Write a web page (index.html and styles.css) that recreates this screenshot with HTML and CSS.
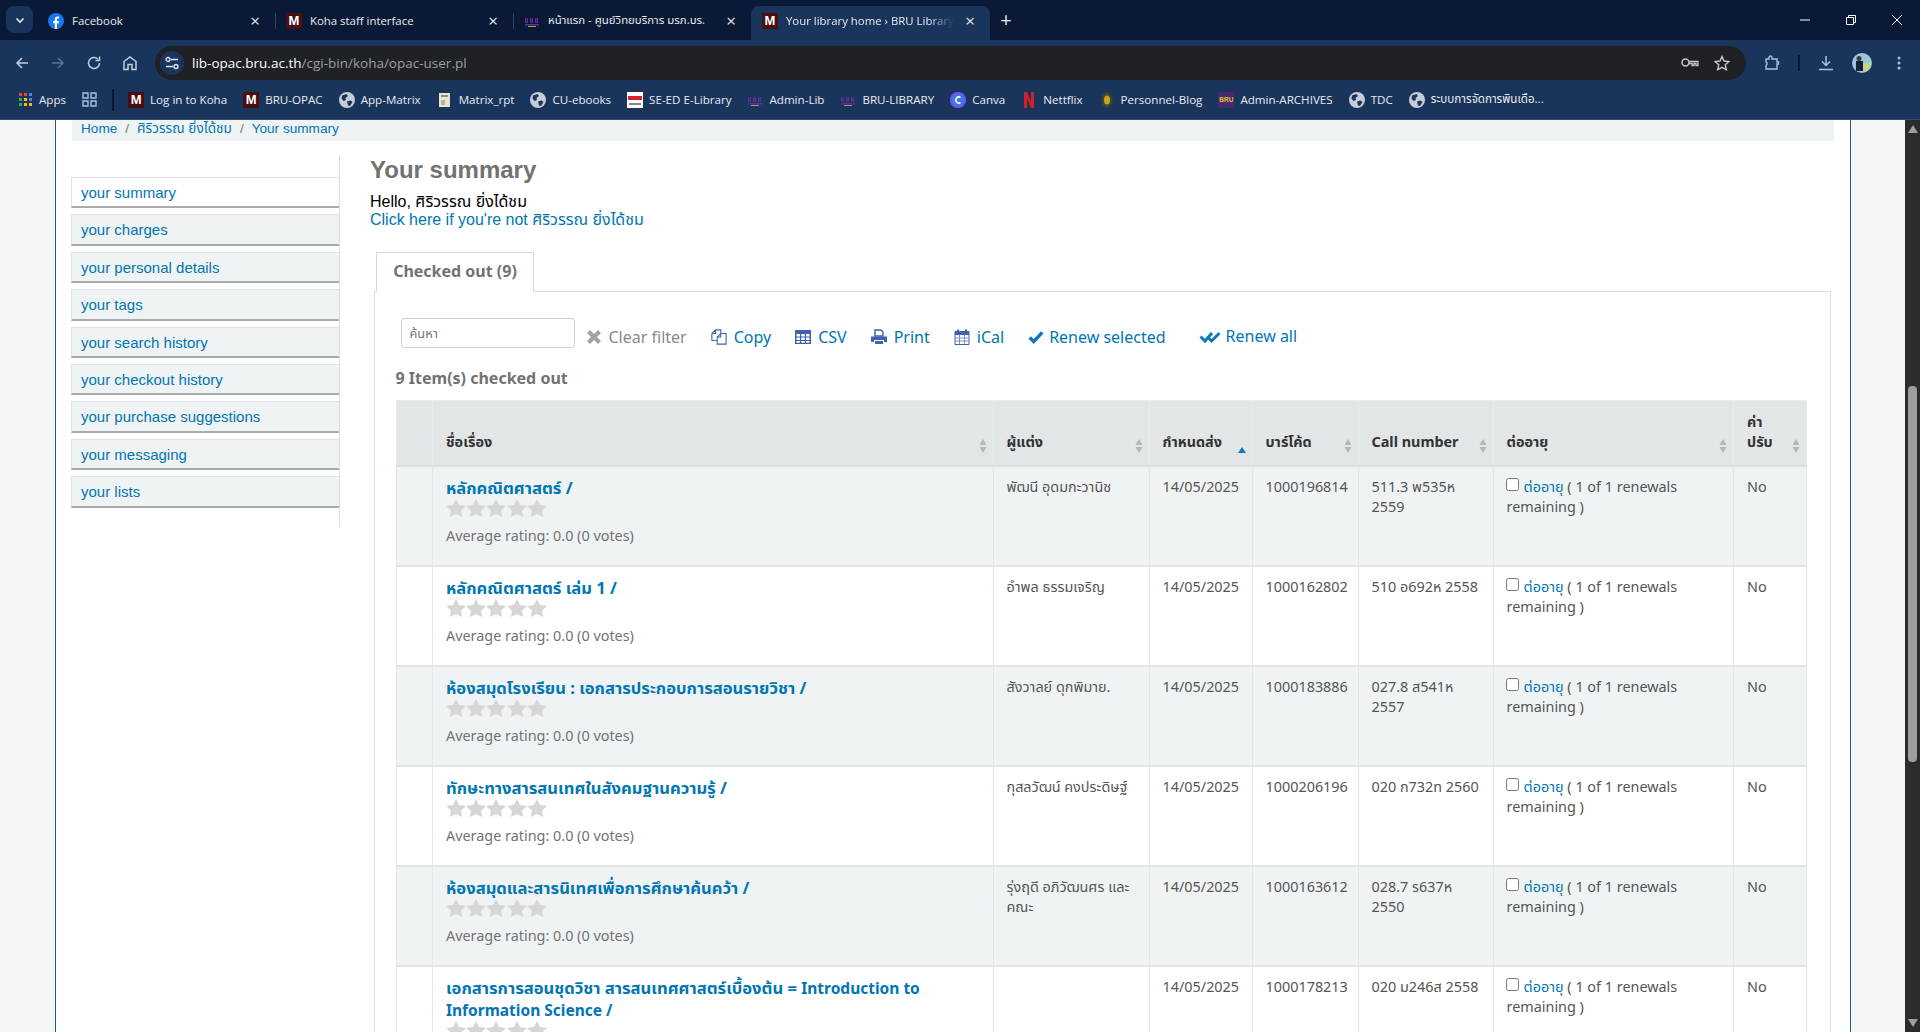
FILE: index.html
```html
<!DOCTYPE html>
<html lang="en">
<head>
    <meta charset="UTF-8">
    <title>Your library home › BRU Library</title>
    <link rel="stylesheet" href="styles.css">
</head>
<body>
    <svg class="sprite" width="0" height="0">
        <symbol id="globe" viewBox="0 0 16 16">
            <circle cx="8" cy="8" r="8" fill="#c7cdd6"/>
            <path d="M3 3.500 7.500 2 9 4 6.500 6 7 8 4.500 9 2.500 6.500Z M8 9.500 11.500 8.500 13.500 10 11 14 9 13.500Z" fill="#1a355c"/>
        </symbol>
        <symbol id="bru" viewBox="0 0 16 16">
            <path d="M1 5h1.500v5H1ZM3 5h1v5H3ZM6 5h1.500v5H6ZM8 5h1v5H8ZM11 5h1.500v5H11ZM13 5h1v5h-1Z" fill="#5b2f96"/>
            <path d="M1 11h14v1.500H1Z" fill="#5b2f96"/>
            <path d="M4 13h8v1H4Z" fill="#b79a3a"/>
        </symbol>
        <symbol id="star" viewBox="0 0 20 18">
            <path d="M10 0 13 6 20 6.900 15 11.700 16.200 18 10 15 3.800 18 5 11.700 0 6.900 7 6Z" fill="#d6d6d6"/>
        </symbol>
        <symbol id="sort" viewBox="0 0 8 16">
            <path d="M4 1 7.500 7H.5ZM4 15 .5 9h7Z" fill="#b4b8b8"/>
        </symbol>
    </svg>

    <!-- Browser chrome -->
    <div class="tabstrip">
        <div class="tab-search"><svg width="12" height="12" viewBox="0 0 12 12"><path d="M2.500 4.500 6 8l3.500-3.500" fill="none" stroke="#e8eaed" stroke-width="1.600"/></svg></div>
        <div class="tab">
            <svg class="favicon" viewBox="0 0 16 16"><circle cx="8" cy="8" r="8" fill="#1877f2"/><path d="M6.800 16V10.200H5V8h1.800V6.400C6.800 4.500 7.900 3.500 9.600 3.500c.8 0 1.500.1 1.500.1v1.900h-.9c-.9 0-1.200.6-1.200 1.200V8h2l-.3 2.200H9V16Z" fill="#fff"/></svg>
            <span class="tab-title">Facebook</span><span class="tab-close">&times;</span>
        </div>
        <div class="tab">
            <span class="favicon m-icon">M</span>
            <span class="tab-title">Koha staff interface</span><span class="tab-close">&times;</span>
        </div>
        <div class="tab">
            <svg class="favicon"><use href="#bru"/></svg>
            <span class="tab-title">หน้าแรก - ศูนย์วิทยบริการ มรภ.บร.</span><span class="tab-close">&times;</span>
        </div>
        <div class="tab tab-active">
            <span class="favicon m-icon">M</span>
            <span class="tab-title">Your library home › BRU Library</span><span class="tab-close">&times;</span>
        </div>
        <span class="tab-new">+</span>
        <div class="window-controls">
            <svg width="12" height="12" viewBox="0 0 12 12"><path d="M1 6h10" stroke="#fff"/></svg>
            <svg width="12" height="12" viewBox="0 0 12 12"><path d="M1.500 3.500h7v7h-7ZM3.500 3V1.500h7v7H9" fill="none" stroke="#fff"/></svg>
            <svg width="12" height="12" viewBox="0 0 12 12"><path d="M1 1l10 10M11 1 1 11" stroke="#fff"/></svg>
        </div>
    </div>

    <div class="toolbar">
        <svg class="nav-icon" viewBox="0 0 16 16"><path d="M14 8H3M8 3 3 8l5 5" fill="none" stroke="#c2cede" stroke-width="1.500"/></svg>
        <svg class="nav-icon" viewBox="0 0 16 16"><path d="M2 8h11M8 3l5 5-5 5" fill="none" stroke="#5d7391" stroke-width="1.500"/></svg>
        <svg class="nav-icon" viewBox="0 0 16 16"><path d="M13.500 8A5.500 5.500 0 1 1 11.800 4M13.500 1.500v4h-4" fill="none" stroke="#c2cede" stroke-width="1.500"/></svg>
        <svg class="nav-icon" viewBox="0 0 16 16"><path d="M2 14.500V6.500L8 2l6 4.500v8h-4V9.500H6v5Z" fill="none" stroke="#c2cede" stroke-width="1.500"/></svg>
        <div class="omnibox">
            <span class="site-info"><svg width="14" height="14" viewBox="0 0 14 14"><path d="M6 3.500h7M1 10.500h7" stroke="#e3e8ef" stroke-width="1.300"/><circle cx="3" cy="3.500" r="2" fill="none" stroke="#e3e8ef" stroke-width="1.300"/><circle cx="11" cy="10.500" r="2" fill="none" stroke="#e3e8ef" stroke-width="1.300"/></svg></span>
            <span class="url">lib-opac.bru.ac.th<span class="url-path">/cgi-bin/koha/opac-user.pl</span></span>
            <svg class="omni-icon key" viewBox="0 0 18 12"><circle cx="4.500" cy="5.500" r="3.500" fill="none" stroke="#c4c7c5" stroke-width="1.500"/><path d="M8 4.500h9v4h-2v-2h-2v2h-2v-2H8" fill="none" stroke="#c4c7c5" stroke-width="1.300"/></svg>
            <svg class="omni-icon star" viewBox="0 0 16 16"><path d="M8 1.500 10 6l5 .5-3.700 3.300 1 4.900L8 12.300l-4.300 2.400 1-4.900L1 6.500 6 6Z" fill="none" stroke="#c4c7c5" stroke-width="1.400"/></svg>
        </div>
        <svg class="tool-icon ext" viewBox="0 0 16 16"><path d="M2 4h3V2.500a1.500 1.500 0 0 1 3 0V4h5v3h1.500v2H13v5H2v-3.500c1.500-.5 1.500-3 0-3.500Z" fill="none" stroke="#aac1e2" stroke-width="1.400"/></svg>
        <span class="tool-sep"></span>
        <svg class="tool-icon down" viewBox="0 0 16 16"><path d="M8 1v9M4 6.500 8 10.500l4-4M1 14.500h14" fill="none" stroke="#aac1e2" stroke-width="1.500"/></svg>
        <svg class="avatar" viewBox="0 0 20 20"><circle cx="10" cy="10" r="10" fill="#9fc6d8"/><path d="M11 10h8a9 9 0 0 1-4 8h-4Z" fill="#c9d08c"/><path d="M4 8h7v10H4Z" fill="#14233c"/><circle cx="7" cy="5.500" r="2.500" fill="#3a3a4a"/></svg>
        <svg class="tool-icon menu" viewBox="0 0 16 16"><circle cx="8" cy="3" r="1.500" fill="#aac1e2"/><circle cx="8" cy="8" r="1.500" fill="#aac1e2"/><circle cx="8" cy="13" r="1.500" fill="#aac1e2"/></svg>
    </div>

    <div class="bookmarks">
        <div class="bm bm-apps">
            <svg class="favicon" viewBox="0 0 15 15"><path d="M1 1h3v3H1Z" fill="#ea4335"/><path d="M6 1h3v3H6Z" fill="#ea4335"/><path d="M11 1h3v3h-3Z" fill="#4285f4"/><path d="M1 6h3v3H1Z" fill="#34a853"/><path d="M6 6h3v3H6Z" fill="#fbbc04"/><path d="M11 6h3v3h-3Z" fill="#4285f4"/><path d="M1 11h3v3H1Z" fill="#34a853"/><path d="M6 11h3v3H6Z" fill="#fbbc04"/><path d="M11 11h3v3h-3Z" fill="#fbbc04"/></svg>
            Apps
        </div>
        <svg class="bm-groups" viewBox="0 0 15 15"><path d="M1 1h5v5H1ZM9 1h5v5H9ZM1 9h5v5H1ZM9 9h5v5H9Z" fill="none" stroke="#aac1e2" stroke-width="1.400"/></svg>
        <span class="bm-sep"></span>
        <div class="bm"><span class="favicon m-icon">M</span>Log in to Koha</div>
        <div class="bm"><span class="favicon m-icon">M</span>BRU-OPAC</div>
        <div class="bm"><svg class="favicon"><use href="#globe"/></svg>App-Matrix</div>
        <div class="bm"><svg class="favicon" viewBox="0 0 16 16"><path d="M2 1h11v14H2Z" fill="#e8e4cf"/><path d="M4 3h7v2H4Z" fill="#7c9a6b"/><path d="M4 8h4v5H4Z" fill="#b5b39a"/></svg>Matrix_rpt</div>
        <div class="bm"><svg class="favicon"><use href="#globe"/></svg>CU-ebooks</div>
        <div class="bm"><svg class="favicon" viewBox="0 0 16 16"><path d="M0 0h16v16H0Z" fill="#fff"/><path d="M1 4h14v4H1Z" fill="#d3232a"/><path d="M2 11h12v2H2Z" fill="#888"/></svg>SE-ED E-Library</div>
        <div class="bm"><svg class="favicon"><use href="#bru"/></svg>Admin-Lib</div>
        <div class="bm"><svg class="favicon"><use href="#bru"/></svg>BRU-LIBRARY</div>
        <div class="bm"><svg class="favicon" viewBox="0 0 16 16"><circle cx="8" cy="8" r="8" fill="#3d7be0"/><circle cx="8" cy="8" r="7.200" fill="none" stroke="#8b3dff" stroke-width="1.500"/><path d="M10.500 5.500a3 3 0 1 0 0 5" fill="none" stroke="#fff" stroke-width="1.500"/></svg>Canva</div>
        <div class="bm"><svg class="favicon" viewBox="0 0 16 16"><path d="M3 0h3l4 10V0h3v16h-3L6 6v10H3Z" fill="#d81f26"/></svg>Nettflix</div>
        <div class="bm"><svg class="favicon" viewBox="0 0 16 16"><ellipse cx="8" cy="8" rx="5.500" ry="7.500" fill="#3c4a2a"/><ellipse cx="8" cy="8" rx="3" ry="4.500" fill="#c9a227"/></svg>Personnel-Blog</div>
        <div class="bm"><span class="favicon bru-icon">BRU</span>Admin-ARCHIVES</div>
        <div class="bm"><svg class="favicon"><use href="#globe"/></svg>TDC</div>
        <div class="bm"><svg class="favicon"><use href="#globe"/></svg>ระบบการจัดการพินเดือ...</div>
    </div>

    <div class="viewport">
        <div class="page">
            <div class="wrap">
                <ul class="breadcrumb">
                    <li><a href="#">Home</a></li>
                    <li><a href="#">ศิริวรรณ ยิ่งได้ชม</a></li>
                    <li><a href="#">Your summary</a></li>
                </ul>

                <div class="columns">
                    <!-- User menu -->
                    <nav class="usermenu">
                        <a class="active" href="#">your summary</a>
                        <a href="#">your charges</a>
                        <a href="#">your personal details</a>
                        <a href="#">your tags</a>
                        <a href="#">your search history</a>
                        <a href="#">your checkout history</a>
                        <a href="#">your purchase suggestions</a>
                        <a href="#">your messaging</a>
                        <a href="#">your lists</a>
                    </nav>

                    <main class="content">
                        <h1>Your summary</h1>
                        <p class="hello">Hello, ศิริวรรณ ยิ่งได้ชม<br><a href="#">Click here if you're not ศิริวรรณ ยิ่งได้ชม</a></p>

                        <div class="tabs"><a class="tab-label" href="#">Checked out (9)</a></div>
                        <section class="panel">
                            <div class="actions">
                                <input class="filter" type="text" placeholder="ค้นหา">
                                <a class="action muted" href="#"><svg class="ico" viewBox="0 0 16 16"><path d="M1 4 4 1l4 4 4-4 3 3-4 4 4 4-3 3-4-4-4 4-3-3 4-4Z" fill="#a3a3a3"/></svg>Clear filter</a>
                                <a class="action" href="#"><svg class="ico" viewBox="0 0 18 18"><path d="M11 5V1H5L1 5v8h6M5 1v4H1M11 5h6v12H7V9ZM11 5v4H7" fill="none" stroke="#3f62ad" stroke-width="1.200"/></svg>Copy</a>
                                <a class="action" href="#"><svg class="ico" viewBox="0 0 16 14"><path d="M0 0h16v14H0Z" fill="#3f62ad"/><path d="M1.500 4h3.500v2.500H1.500ZM6.200 4h3.600v2.500H6.200ZM11 4h3.500v2.500H11ZM1.500 7.500h3.500V10H1.500ZM6.200 7.500h3.600V10H6.200ZM11 7.500h3.500V10H11ZM1.500 11h3.500v1.800H1.500ZM6.200 11h3.600v1.800H6.200ZM11 11h3.500v1.800H11Z" fill="#fff"/></svg>CSV</a>
                                <a class="action" href="#"><svg class="ico" viewBox="0 0 16 16"><path d="M4 1h6l2 2v4H4Z" fill="none" stroke="#3f62ad" stroke-width="1.400"/><path d="M0 7.500h16V13h-3v-2H3v2H0ZM4 12h8v3H4Z" fill="#3f62ad"/></svg>Print</a>
                                <a class="action" href="#"><svg class="ico" viewBox="0 0 16 16"><path d="M1 2.500h14v13H1Z" fill="#fff" stroke="#3f62ad"/><path d="M1 2.500h14V6H1Z" fill="#3f62ad"/><path d="M4 .5v3M12 .5v3" stroke="#3f62ad" stroke-width="2"/><path d="M1 9h14M1 12h14M5.500 6v9M10.500 6v9" stroke="#7d8fc4"/></svg>iCal</a>
                                <a class="action renew" href="#"><svg class="ico" viewBox="0 0 14 12"><path d="M1.500 6.500 5 10l7.500-8" fill="none" stroke="#0d79b8" stroke-width="3"/></svg>Renew selected</a>
                                <a class="action renew-all" href="#"><svg class="ico" viewBox="0 0 22 12"><path d="M1.500 5.500 6 10l7-8M9.500 7l3 3L20.500 2" fill="none" stroke="#0d79b8" stroke-width="3"/></svg>Renew all</a>
                            </div>
                            <p class="count">9 Item(s) checked out</p>

                            <table class="checkouts">
                                <colgroup>
                                    <col class="c-blank"><col class="c-title"><col class="c-author"><col class="c-due"><col class="c-barcode"><col class="c-call"><col class="c-renew"><col class="c-fine">
                                </colgroup>
                                <thead>
                                    <tr>
                                        <th></th>
                                        <th>ชื่อเรื่อง<svg class="sort"><use href="#sort"/></svg></th>
                                        <th>ผู้แต่ง<svg class="sort"><use href="#sort"/></svg></th>
                                        <th>กำหนดส่ง<svg class="sort" viewBox="0 0 8 16"><path d="M4 9 8 15H0Z" fill="#0d79c8"/></svg></th>
                                        <th>บาร์โค้ด<svg class="sort"><use href="#sort"/></svg></th>
                                        <th>Call number<svg class="sort"><use href="#sort"/></svg></th>
                                        <th>ต่ออายุ<svg class="sort"><use href="#sort"/></svg></th>
                                        <th>ค่า<br>ปรับ<svg class="sort"><use href="#sort"/></svg></th>
                                    </tr>
                                </thead>
                                <tbody>
                                    <tr>
                                        <td></td>
                                        <td><a class="book" href="#">หลักคณิตศาสตร์ /</a><div class="stars"><svg><use href="#star"/></svg><svg><use href="#star"/></svg><svg><use href="#star"/></svg><svg><use href="#star"/></svg><svg><use href="#star"/></svg></div><div class="rating">Average rating: 0.0 (0 votes)</div></td>
                                        <td>พัฒนี อุดมกะวานิช</td>
                                        <td>14/05/2025</td>
                                        <td>1000196814</td>
                                        <td>511.3 พ535ห 2559</td>
                                        <td><input type="checkbox"><a href="#">ต่ออายุ</a> ( 1 of 1 renewals remaining )</td>
                                        <td>No</td>
                                    </tr>
                                    <tr>
                                        <td></td>
                                        <td><a class="book" href="#">หลักคณิตศาสตร์ เล่ม 1 /</a><div class="stars"><svg><use href="#star"/></svg><svg><use href="#star"/></svg><svg><use href="#star"/></svg><svg><use href="#star"/></svg><svg><use href="#star"/></svg></div><div class="rating">Average rating: 0.0 (0 votes)</div></td>
                                        <td>อำพล ธรรมเจริญ</td>
                                        <td>14/05/2025</td>
                                        <td>1000162802</td>
                                        <td>510 อ692ห 2558</td>
                                        <td><input type="checkbox"><a href="#">ต่ออายุ</a> ( 1 of 1 renewals remaining )</td>
                                        <td>No</td>
                                    </tr>
                                    <tr>
                                        <td></td>
                                        <td><a class="book" href="#">ห้องสมุดโรงเรียน : เอกสารประกอบการสอนรายวิชา /</a><div class="stars"><svg><use href="#star"/></svg><svg><use href="#star"/></svg><svg><use href="#star"/></svg><svg><use href="#star"/></svg><svg><use href="#star"/></svg></div><div class="rating">Average rating: 0.0 (0 votes)</div></td>
                                        <td>สังวาลย์ ดุกพิมาย.</td>
                                        <td>14/05/2025</td>
                                        <td>1000183886</td>
                                        <td>027.8 ส541ห 2557</td>
                                        <td><input type="checkbox"><a href="#">ต่ออายุ</a> ( 1 of 1 renewals remaining )</td>
                                        <td>No</td>
                                    </tr>
                                    <tr>
                                        <td></td>
                                        <td><a class="book" href="#">ทักษะทางสารสนเทศในสังคมฐานความรู้ /</a><div class="stars"><svg><use href="#star"/></svg><svg><use href="#star"/></svg><svg><use href="#star"/></svg><svg><use href="#star"/></svg><svg><use href="#star"/></svg></div><div class="rating">Average rating: 0.0 (0 votes)</div></td>
                                        <td>กุสลวัฒน์ คงประดิษฐ์</td>
                                        <td>14/05/2025</td>
                                        <td>1000206196</td>
                                        <td>020 ก732ท 2560</td>
                                        <td><input type="checkbox"><a href="#">ต่ออายุ</a> ( 1 of 1 renewals remaining )</td>
                                        <td>No</td>
                                    </tr>
                                    <tr>
                                        <td></td>
                                        <td><a class="book" href="#">ห้องสมุดและสารนิเทศเพื่อการศึกษาค้นคว้า /</a><div class="stars"><svg><use href="#star"/></svg><svg><use href="#star"/></svg><svg><use href="#star"/></svg><svg><use href="#star"/></svg><svg><use href="#star"/></svg></div><div class="rating">Average rating: 0.0 (0 votes)</div></td>
                                        <td>รุ่งฤดี อภิวัฒนศร และคณะ</td>
                                        <td>14/05/2025</td>
                                        <td>1000163612</td>
                                        <td>028.7 ร637ห 2550</td>
                                        <td><input type="checkbox"><a href="#">ต่ออายุ</a> ( 1 of 1 renewals remaining )</td>
                                        <td>No</td>
                                    </tr>
                                    <tr>
                                        <td></td>
                                        <td><a class="book" href="#">เอกสารการสอนชุดวิชา สารสนเทศศาสตร์เบื้องต้น = <span class="latin">Introduction to Information Science /</span></a><div class="stars"><svg><use href="#star"/></svg><svg><use href="#star"/></svg><svg><use href="#star"/></svg><svg><use href="#star"/></svg><svg><use href="#star"/></svg></div><div class="rating">Average rating: 0.0 (0 votes)</div></td>
                                        <td></td>
                                        <td>14/05/2025</td>
                                        <td>1000178213</td>
                                        <td>020 ม246ส 2558</td>
                                        <td><input type="checkbox"><a href="#">ต่ออายุ</a> ( 1 of 1 renewals remaining )</td>
                                        <td>No</td>
                                    </tr>
                                </tbody>
                            </table>
                        </section>
                    </main>
                </div>
            </div>
        </div>

        <div class="scrollbar">
            <span class="sb-arrow"></span>
            <div class="sb-track"><span class="sb-thumb"></span></div>
            <span class="sb-arrow sb-down"></span>
        </div>
    </div>
</body>
</html>
```

FILE: styles.css
```css
:root {
    --chrome-dark: #0a1a36;
    --chrome: #1a355c;
    --link: #0076b2;
    --row: #f0f3f3;
    --ui-font: "Open Sans", "Noto Sans", "Noto Sans Thai", Tahoma, sans-serif;
    --page-font: "Liberation Sans", "Noto Sans Thai", Tahoma, sans-serif;
    --body-font: "Noto Sans", "Open Sans", "Noto Sans Thai", Tahoma, sans-serif;
}

* {
    box-sizing: border-box;
}

html, body {
    margin: 0;
    height: 100%;
    overflow: hidden;
}

body {
    display: flex;
    flex-direction: column;
    background: var(--chrome);
    font-family: var(--page-font);
}

a {
    color: var(--link);
    text-decoration: none;
}

.sprite {
    position: absolute;
}

.favicon {
    flex: none;
    width: 16px;
    height: 16px;
}

.m-icon {
    display: flex;
    align-items: center;
    justify-content: center;
    background: #4a0f12;
    color: #fff;
    font: bold 13px "Liberation Sans", sans-serif;
}

.bru-icon {
    display: flex;
    align-items: center;
    justify-content: center;
    background: #46296f;
    color: #e4c33a;
    font: bold 6.5px "Liberation Sans", sans-serif;
}

/* Tabs */
.tabstrip {
    flex: none;
    height: 40px;
    display: flex;
    align-items: flex-end;
    padding-left: 37px;
    position: relative;
    background: var(--chrome-dark);
    font-family: var(--ui-font);
    font-size: 11.4px;
    color: #e8eaed;
}

.tab-search {
    position: absolute;
    left: 6px;
    top: 6px;
    width: 27px;
    height: 27px;
    display: flex;
    align-items: center;
    justify-content: center;
    background: var(--chrome);
    border-radius: 8px;
}

.tab {
    width: 238px;
    height: 34px;
    display: flex;
    align-items: center;
    gap: 8px;
    padding: 0 12px 5px 11px;
    position: relative;
}

.tab + .tab::before {
    content: "";
    position: absolute;
    left: 0;
    top: 7px;
    height: 16px;
    border-left: 1px solid #2a4263;
}

.tab-title {
    flex: 1;
    white-space: nowrap;
    overflow: hidden;
}

.tab-close {
    flex: none;
    width: 16px;
    text-align: center;
    font-size: 17px;
    line-height: 16px;
    color: #e3e6ea;
}

.tab-active {
    width: 239px;
    background: var(--chrome);
    border-radius: 8px 8px 0 0;
}

.tab-active .tab-title {
    -webkit-mask-image: linear-gradient(to right, #000 85%, transparent);
    mask-image: linear-gradient(to right, #000 85%, transparent);
}

.tab-active::before {
    display: none;
}

.tab-new {
    height: 34px;
    margin-left: 6px;
    width: 20px;
    text-align: center;
    font-size: 20px;
    line-height: 28px;
}

.window-controls {
    position: absolute;
    right: 17px;
    top: 14px;
    display: flex;
    gap: 34px;
}

/* Address bar */
.toolbar {
    flex: none;
    height: 40px;
    display: flex;
    align-items: center;
    padding-left: 14px;
    background: var(--chrome);
    border-radius: 8px 8px 0 0;
}

.nav-icon {
    width: 16px;
    height: 16px;
    margin-right: 20px;
}

.omnibox {
    width: 1591px;
    height: 34px;
    margin: 6px 0 0 -3px;
    display: flex;
    align-items: center;
    padding: 0 16px 0 5px;
    background: #202124;
    border-radius: 17px;
    font-family: var(--ui-font);
    font-size: 13.5px;
}

.toolbar > svg {
    margin-top: 6px;
}

.site-info {
    width: 24px;
    height: 24px;
    display: flex;
    align-items: center;
    justify-content: center;
    border-radius: 50%;
    background: var(--chrome);
}

.url {
    flex: 1;
    margin-left: 8px;
    color: #fff;
}

.url-path {
    color: #9aa0a6;
}

.omni-icon {
    flex: none;
}

.omni-icon.key {
    width: 18px;
    height: 12px;
    margin-right: 15px;
}

.omni-icon.star {
    width: 16px;
    height: 16px;
}

.tool-icon {
    width: 16px;
    height: 16px;
}

.tool-icon.ext {
    margin-left: 18px;
}

.tool-sep {
    width: 2px;
    height: 16px;
    margin: 6px 18px 0 18px;
    background: #0a1a36;
}

.avatar {
    width: 20px;
    height: 20px;
    margin-left: 18px;
}

.tool-icon.menu {
    margin-left: 19px;
}

/* Bookmarks bar */
.bookmarks {
    flex: none;
    height: 40px;
    display: flex;
    align-items: center;
    padding-left: 18px;
    background: var(--chrome);
    border-bottom: 1px solid #38506f;
    font-family: var(--ui-font);
    font-size: 11.6px;
    color: #e8eaed;
    white-space: nowrap;
}

.bm {
    display: flex;
    align-items: center;
    gap: 6px;
    margin-right: 16px;
}

.bm-apps .favicon {
    width: 15px;
    height: 15px;
}

.bm-groups {
    width: 15px;
    height: 15px;
}

.bm-sep {
    width: 2px;
    height: 22px;
    margin: 0 14px 0 15px;
    background: #0a1a36;
}

/* Page */
.viewport {
    flex: 1;
    min-height: 0;
    display: flex;
}

.page {
    flex: 1;
    min-width: 0;
    overflow: hidden;
    padding-left: 55px;
    background: #f4f5f5;
}

.wrap {
    width: 1796px;
    height: 100%;
    padding: 0 16px;
    background: #fff;
    border-left: 1px solid #1a5a8a;
    border-right: 1px solid #1a5a8a;
}

.breadcrumb {
    list-style: none;
    margin: 0 0 15px;
    padding: 0 0 4px 9px;
    height: 21px;
    display: flex;
    align-items: center;
    background: var(--row);
    font-size: 13.6px;
    line-height: 16px;
}

.breadcrumb li + li::before {
    content: "/";
    margin: 0 8px;
    color: #777;
}

.columns {
    display: flex;
    align-items: flex-start;
}

.usermenu {
    flex: none;
    width: 269px;
    height: 371px;
    margin-left: -1px;
    padding-top: 21px;
    display: flex;
    flex-direction: column;
    gap: 6px;
    border-right: 1px solid #ddd;
    font-size: 15px;
}

.usermenu a {
    height: 31.4px;
    padding-left: 9px;
    line-height: 30px;
    background: var(--row);
    border: 1px solid #e1e3e3;
    border-bottom: 2px solid #a7abab;
    border-right: none;
}

.usermenu a.active {
    background: #fff;
}

.content {
    flex: 1;
    min-width: 0;
    padding-left: 30px;
}

.content h1 {
    margin: 0;
    font-size: 24px;
    line-height: 28px;
    color: #727272;
}

.hello {
    margin: 9px 0 0;
    font-size: 16px;
    line-height: 18px;
    color: #000;
}

.tabs {
    margin: 23px 0 0 6px;
    height: 40px;
}

.tab-label {
    display: inline-block;
    width: 158px;
    height: 40px;
    text-align: center;
    font: bold 16px/36px var(--body-font);
    color: #727272;
    background: #fff;
    border: 1px solid #d6d9d9;
    border-bottom: none;
}

.panel {
    width: 1457px;
    margin: -1px 0 0 3.5px;
    padding: 26px 22px 0 21px;
    border: 1px solid #dadddd;
    border-bottom: none;
    font-family: var(--body-font);
    font-size: 14.4px;
    line-height: 20px;
    color: #555;
}

.actions {
    height: 30px;
    display: flex;
    align-items: center;
    padding-left: 5px;
    gap: 24px;
    font-size: 16px;
}

.filter {
    width: 174px;
    height: 30px;
    padding: 0 8px;
    margin-right: -13px;
    border: 1px solid #ced2d2;
    border-radius: 3px;
    font-family: var(--body-font);
    font-size: 12.8px;
}

.filter::placeholder {
    color: #757575;
}

.action {
    display: flex;
    align-items: center;
    gap: 7px;
    padding-top: 7px;
}

.action.muted {
    color: #8a8a8a;
}

.ico {
    flex: none;
    width: 16px;
    height: 16px;
}

.renew {
    gap: 5px;
}

.renew-all {
    gap: 5px;
    margin-left: 9px;
    padding-top: 5px;
}

.renew-all .ico {
    width: 22px;
    height: 14px;
    margin-top: 3px;
}

.count {
    margin: 19px 0 11px;
    font-size: 16px;
    line-height: 22px;
    font-weight: bold;
    color: #727272;
}

.checkouts {
    width: 1410px;
    table-layout: fixed;
    border-collapse: collapse;
}

.c-blank { width: 36.5px; }
.c-title { width: 560.5px; }
.c-author { width: 156px; }
.c-due { width: 103px; }
.c-barcode { width: 106px; }
.c-call { width: 135px; }
.c-renew { width: 240.5px; }
.c-fine { width: 72.5px; }

.checkouts th {
    position: relative;
    height: 65px;
    padding: 0 13px 13px;
    vertical-align: bottom;
    text-align: left;
    color: #333;
    background: #e2e6e6;
    border: 1px solid #e9ecec;
    border-bottom: 2px solid #dadfe3;
}

.sort {
    position: absolute;
    right: 6px;
    bottom: 11px;
    width: 8px;
    height: 16px;
}

.checkouts td {
    height: 100px;
    padding: 10px 13px;
    vertical-align: top;
    border: 1px solid #e4e7e7;
    border-bottom: 2px solid #e0e4e4;
}

.checkouts tbody tr:nth-child(odd) td {
    background: var(--row);
}

.book {
    font-size: 16.6px;
    font-weight: bold;
    line-height: 21px;
}

.latin {
    font-size: 15.5px;
}

.stars {
    display: flex;
    gap: 0.2px;
    height: 20px;
}

.stars svg {
    width: 20px;
    height: 18px;
}

.rating {
    margin-top: 7px;
    color: #727272;
}

.checkouts input[type="checkbox"] {
    width: 13px;
    height: 13px;
    margin: 0 5px 0 -1px;
    vertical-align: 1px;
}

/* Scrollbar */
.scrollbar {
    flex: none;
    width: 15px;
    display: flex;
    flex-direction: column;
    align-items: center;
    background: #2c2c2c;
}

.sb-arrow {
    flex: none;
    margin: 5px 0;
    border-left: 5px solid transparent;
    border-right: 5px solid transparent;
    border-bottom: 8px solid #9e9e9e;
}

.sb-down {
    border-bottom: none;
    border-top: 8px solid #9e9e9e;
}

.sb-track {
    flex: 1;
    width: 100%;
    display: flex;
    justify-content: center;
    padding-top: 248px;
}

.sb-thumb {
    width: 9px;
    height: 376px;
    background: #9e9e9e;
    border-radius: 4px;
}
```
